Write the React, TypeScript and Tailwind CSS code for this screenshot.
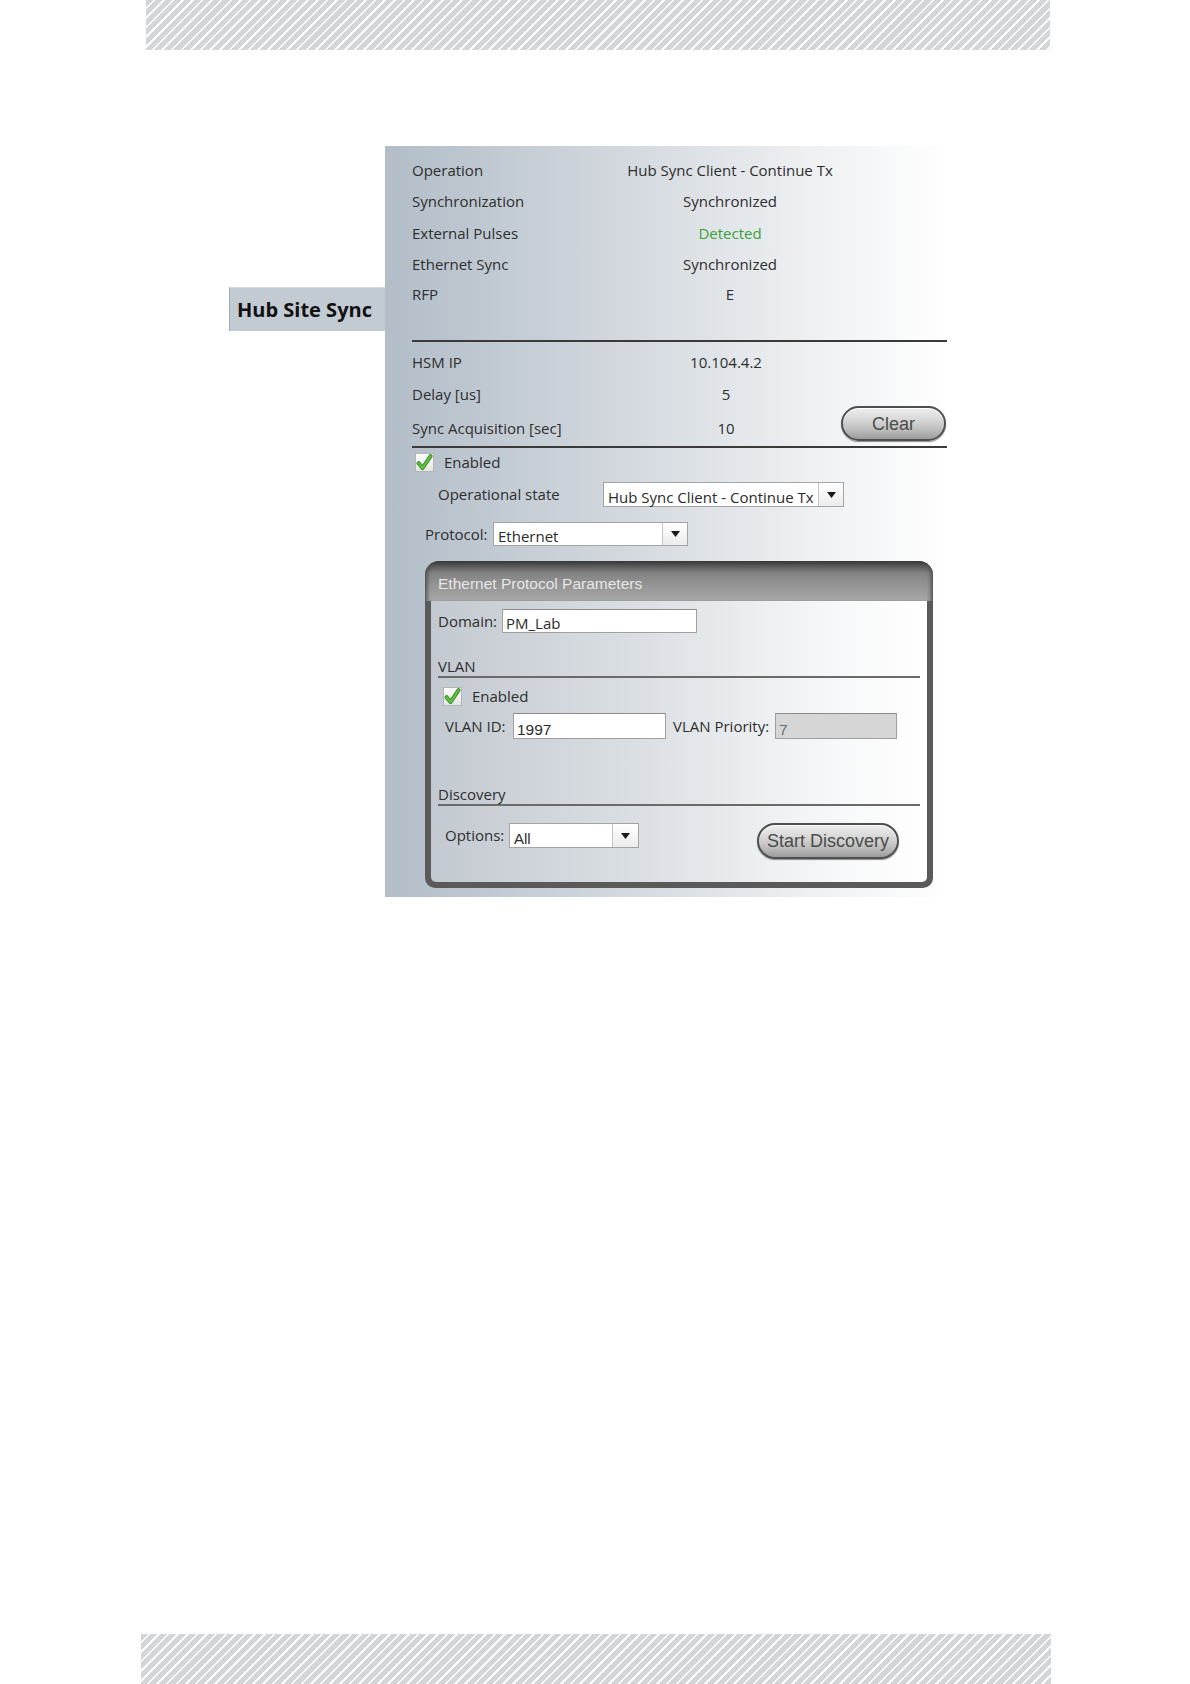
import React from 'react'

const stripes =
  'bg-[repeating-linear-gradient(135deg,#d3d5d7_0px,#d3d5d7_5px,#ffffff_5px,#ffffff_6.8px)]'

function Check() {
  return (
    <div className="w-[19px] h-[19px] border border-[#b5b5b5] bg-[linear-gradient(180deg,#ffffff,#e4e4e4)] flex items-center justify-center shrink-0">
      <svg width="17" height="17" viewBox="0 0 17 17">
        <path d="M2.6 9.2 L6.6 14 L14.6 2.2" fill="none" stroke="#2f7f22" strokeWidth="4" strokeLinecap="round" strokeLinejoin="round" />
        <path d="M2.6 9.2 L6.6 14 L14.6 2.2" fill="none" stroke="#5cc23f" strokeWidth="2.4" strokeLinecap="round" strokeLinejoin="round" />
      </svg>
    </div>
  )
}

function Select({ text, w, h, arrow = 25, mono = false }: { text: string; w: string; h: string; arrow?: number; mono?: boolean }) {
  return (
    <div className={`flex ${w} ${h} border border-[#a4a4a4] bg-white shrink-0`}>
      <span className={`flex-1 flex items-end pb-[1px] pl-[4px] text-[#2b2b2b] leading-none ${mono ? "font-['Liberation_Sans',sans-serif] text-[15px]" : 'text-[15px]'}`}>
        {text}
      </span>
      <div
        style={{ width: arrow }}
        className="border-l border-[#c4c4c4] bg-[linear-gradient(180deg,#ffffff,#ececec)] flex items-center justify-center"
      >
        <svg width="9" height="6" viewBox="0 0 9 6">
          <path d="M0 0h9L4.5 6z" fill="#1a1a1a" />
        </svg>
      </div>
    </div>
  )
}

function Field({ text, w, disabled = false, mono = false }: { text: string; w: string; disabled?: boolean; mono?: boolean }) {
  return (
    <div
      className={`${w} h-full border border-[#a0a0a0] border-t-[#8c8c8c] flex items-end pb-[1px] pl-[3px] leading-none shrink-0 ${
        disabled ? 'bg-[#d6d6d6] text-[#6e6e6e]' : 'bg-white text-[#2b2b2b]'
      } ${mono ? "font-['Liberation_Sans',sans-serif] text-[15.5px]" : 'text-[15px]'}`}
    >
      {text}
    </div>
  )
}

function PillButton({ label, w, h }: { label: string; w: string; h: string }) {
  return (
    <button
      type="button"
      className={`${w} ${h} rounded-full border-2 border-[#4f4f4f] bg-[linear-gradient(180deg,#ededed_0%,#d9d9d9_35%,#bdbdbd_70%,#9c9c9c_100%)] shadow-[inset_0_1px_1px_#ffffff,0_1px_1px_#8a8a8a] font-['Liberation_Sans',sans-serif] text-[18px] text-[#4b4b4b] leading-none flex items-center justify-center shrink-0`}
    >
      {label}
    </button>
  )
}

const status = [
  { label: 'Operation', value: 'Hub Sync Client - Continue Tx', h: 'h-[32px]' },
  { label: 'Synchronization', value: 'Synchronized', h: 'h-[31px]' },
  { label: 'External Pulses', value: 'Detected', green: true, h: 'h-[32px]' },
  { label: 'Ethernet Sync', value: 'Synchronized', h: 'h-[30px]' },
  { label: 'RFP', value: 'E', h: 'h-[30px]' },
]

const stats = [
  { label: 'HSM IP', value: '10.104.4.2', h: 'h-[32px]' },
  { label: 'Delay [us]', value: '5', h: 'h-[33px]' },
  { label: 'Sync Acquisition [sec]', value: '10', h: 'h-[35px]' },
]

export default function App() {
  return (
    <div className="w-[1190px] h-[1684px] bg-white flex flex-col font-['Open_Sans',sans-serif] text-[#2e2e2e]">
      {/* top hatched band */}
      <div className={`ml-[146px] w-[904px] h-[50px] shrink-0 ${stripes}`} />

      <div className="mt-[96px] flex">
        {/* side tab */}
        <div className="w-[385px] shrink-0">
          <div className="ml-[229px] mt-[141px] w-[156px] h-[44px] bg-[#c2cad2] border-l border-[#a3acb6] border-t border-t-[#d4dae0] flex items-center pl-[7px]">
            <span className="text-[20px] font-bold text-[#111] leading-none">Hub Site Sync</span>
          </div>
        </div>

        {/* main panel */}
        <div className="w-[567px] h-[751px] bg-[linear-gradient(90deg,#b2bdc8_0%,#d1d7dd_40%,#eef0f2_75%,#ffffff_100%)] flex flex-col">
          {/* status */}
          <div className="pt-[8px] ml-[27px] grid grid-cols-[188px_260px]">
            {status.map(s => (
              <React.Fragment key={s.label}>
                <div className={`${s.h} flex items-center text-[15px] leading-none`}>{s.label}</div>
                <div className={`${s.h} flex items-center justify-center text-[15px] leading-none ${s.green ? 'text-[#38a23a]' : ''}`}>
                  {s.value}
                </div>
              </React.Fragment>
            ))}
          </div>
          <div className="mt-[31px] ml-[27px] w-[535px] h-[2px] bg-[#3a3a3a]" />

          {/* sync stats */}
          <div className="flex h-[104px]">
            <div className="pt-[4px] ml-[27px] grid grid-cols-[188px_252px] content-start">
              {stats.map(s => (
                <React.Fragment key={s.label}>
                  <div className={`${s.h} flex items-center text-[15px] leading-none`}>{s.label}</div>
                  <div className={`${s.h} flex items-center justify-center text-[15px] leading-none`}>{s.value}</div>
                </React.Fragment>
              ))}
            </div>
            <div className="-ml-[11px] mt-[64px]">
              <PillButton label="Clear" w="w-[105px]" h="h-[35px]" />
            </div>
          </div>
          <div className="ml-[27px] w-[535px] h-[2px] bg-[#3a3a3a]" />

          {/* config */}
          <div className="mt-[5px] ml-[30px] flex items-center gap-[10px]">
            <Check />
            <span className="text-[15px] leading-none">Enabled</span>
          </div>

          <div className="mt-[10px] h-[25px] flex items-center">
            <span className="ml-[53px] w-[165px] text-[15px] leading-none">Operational state</span>
            <Select text="Hub Sync Client - Continue Tx" w="w-[241px]" h="h-[25px]" />
          </div>

          <div className="mt-[15px] h-[24px] flex items-center">
            <span className="ml-[40px] w-[68px] text-[15px] leading-none">Protocol:</span>
            <Select text="Ethernet" w="w-[195px]" h="h-[24px]" />
          </div>

          {/* ethernet protocol parameters */}
          <div className="mt-[15px] ml-[40px] w-[508px] rounded-t-[14px] rounded-b-[10px] bg-[#5a5a5a] overflow-hidden">
            <div className="h-[40px] rounded-t-[14px] bg-[linear-gradient(180deg,#353535_0%,#575757_12%,#828282_30%,#949494_60%,#a8a8a8_100%)] shadow-[inset_5px_0_4px_-3px_#4a4a4a,inset_-5px_0_4px_-3px_#4a4a4a] flex items-center pl-[13px] pt-[5px]">
              <span className="font-['Liberation_Sans',sans-serif] text-[15.5px] text-[#e6e6e6] leading-none">
                Ethernet Protocol Parameters
              </span>
            </div>
            <div className="mx-[6px] mb-[6px] rounded-b-[5px] bg-[linear-gradient(90deg,#c2c9d0_0%,#dde1e5_45%,#f6f7f8_80%,#ffffff_100%)] pb-[23px] flex flex-col">
              <div className="mt-[8px] h-[24px] flex items-center">
                <span className="ml-[7px] w-[64px] text-[15px] leading-none">Domain:</span>
                <Field text="PM_Lab" w="w-[195px]" />
              </div>

              <div className="mt-[23px] ml-[7px] w-[482px] h-[22px] border-b-2 border-[#6a6a6a] text-[15px] leading-[20px]">
                VLAN
              </div>

              <div className="mt-[8px] ml-[12px] h-[20px] flex items-center gap-[10px]">
                <Check />
                <span className="text-[15px] leading-none">Enabled</span>
              </div>

              <div className="mt-[7px] h-[26px] flex items-center">
                <span className="ml-[14px] w-[68px] text-[15px] leading-none">VLAN ID:</span>
                <Field text="1997" w="w-[153px]" mono />
                <span className="ml-[7px] w-[102px] text-[15px] leading-none">VLAN Priority:</span>
                <Field text="7" w="w-[122px]" disabled mono />
              </div>

              <div className="mt-[45px] ml-[7px] w-[482px] h-[22px] border-b-2 border-[#6a6a6a] text-[15px] leading-[20px]">
                Discovery
              </div>

              <div className="mt-[17px] h-[36px] flex items-start">
                <span className="ml-[14px] w-[64px] h-[25px] flex items-center text-[15px] leading-none">Options:</span>
                <Select text="All" w="w-[130px]" h="h-[25px]" arrow={26} mono />
                <div className="ml-auto mr-[28px]">
                  <PillButton label="Start Discovery" w="w-[142px]" h="h-[36px]" />
                </div>
              </div>
            </div>
          </div>
        </div>
      </div>

      {/* bottom hatched band */}
      <div className={`mt-auto ml-[141px] w-[910px] h-[50px] shrink-0 ${stripes}`} />
    </div>
  )
}
